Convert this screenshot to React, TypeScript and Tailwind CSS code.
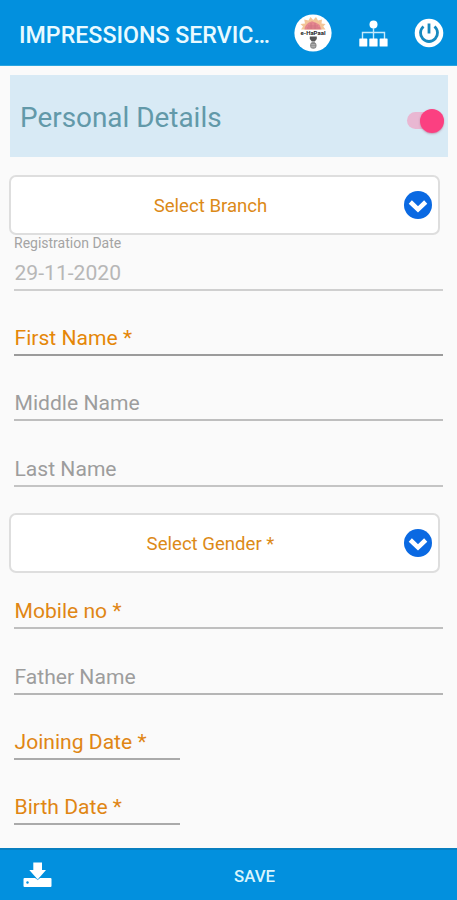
interface FieldProps {
  label: string;
  className: string;
}

const Logo = () => (
  <svg viewBox="0 0 38 38" className="h-[38px] w-[38px] shrink-0">
    <circle cx="19" cy="19" r="18.600" fill="#fff" />
    <path
      d="M7 15.500l2-3-2.500-2.500 4.500-.5-.8-4 4.300 1L16.500 3l2.700 3L22 3l2 3.500 4-1-.5 4 4 .5-2.200 2.500 2.200 3z"
      fill="#f3c598"
    />
    <path d="M10.500 15.500c0-3 2-5.500 4-6.700l3.500-1.500 4 1.500 3.500 2 2 4.700z" fill="#e5878f" />
    <path d="M14 12h10M13 14h13M17 9v6M21 9v6" stroke="#ce7181" strokeWidth=".8" />
    <text
      x="19"
      y="20.500"
      textAnchor="middle"
      fontSize="5"
      fontWeight="700"
      textLength="25"
      lengthAdjust="spacingAndGlyphs"
      fill="#252525"
      className="font-['Roboto',sans-serif]"
    >
      e-HaPaal
    </text>
    <path d="M15.800 22.500h7v2.500l-2 2.500h-3l-2-2.500z" fill="#555" />
    <path d="M17.500 28h3.500v1.200h-3.500z" fill="#aaa" />
    <circle cx="19.300" cy="31.500" r="3.200" fill="#888" />
    <path d="M17.300 30.800h4M17.300 32.800h4" stroke="#ccc" strokeWidth=".8" />
  </svg>
);

const SitemapIcon = () => (
  <svg viewBox="0 0 29 27" className="h-[27px] w-[29px] shrink-0" fill="#fff">
    <circle cx="14.500" cy="4.500" r="4" />
    <path d="M14.500 8v11M3.500 19v-6.500h22V19" fill="none" stroke="#c5e9fb" strokeWidth="1.400" />
    <rect x=".3" y="18.500" width="8" height="8" rx=".6" />
    <rect x="10.300" y="18.500" width="8.300" height="8" rx=".6" />
    <rect x="20.600" y="18.500" width="8" height="8" rx=".6" />
  </svg>
);

const PowerIcon = () => (
  <svg viewBox="0 0 30 30" className="h-[30px] w-[30px] shrink-0">
    <circle cx="15" cy="15" r="14.300" fill="#fff" />
    <path
      d="M9.500 8.500a8.500 8.500 0 1 0 11 0M15 5.500v10"
      fill="none"
      stroke="#1689bf"
      strokeWidth="2.800"
    />
  </svg>
);

const ChevronBadge = () => (
  <svg viewBox="0 0 28 28" className="h-7 w-7 shrink-0">
    <circle cx="14" cy="14" r="14" fill="#0a69e2" />
    <path d="M6.300 11l7.700 7.300 7.700-7.300" fill="none" stroke="#fff" strokeWidth="4.600" />
  </svg>
);

const DownloadIcon = () => (
  <svg viewBox="0 0 29 26" className="h-[26px] w-[29px]">
    <rect x=".5" y="16" width="28" height="9" rx="1" fill="#fff" />
    <path d="M10.300.5h8.700V8h4l-8.300 9.500L6.300 8h4z" fill="#fff" />
    <path d="M11.500 15.200l3.200 2.300 3.200-2.300" fill="none" stroke="#0290de" strokeWidth=".8" />
    <circle cx="4.500" cy="20.500" r="1.200" fill="#0290de" />
  </svg>
);

const SelectBox = ({ label, className }: FieldProps) => (
  <button
    className={`ml-[9px] flex w-[431px] items-center rounded-[7px] border-2 border-[#dedede] bg-white pr-[6px] pl-[6px] text-[#dc8a18] ${className}`}
  >
    <span className="flex-1 pt-[3px] text-center text-[18.600px]">{label}</span>
    <ChevronBadge />
  </button>
);

const Field = ({ label, className }: FieldProps) => (
  <div
    className={`mx-[14px] flex items-end border-b-2 pb-[3px] pl-[0.500px] text-[21.100px] leading-[26px] ${className}`}
  >
    {label}
  </div>
);

const App = () => {
  return (
    <div className="flex h-[900px] w-full flex-col overflow-hidden bg-[#fafafa] font-['Roboto',sans-serif]">
      <header className="flex h-[66px] shrink-0 items-center border-b border-[#2aa5df] bg-[#0290de] pt-px">
        <h1 className="mt-[4px] ml-[19px] w-[275px] text-[23.200px] font-medium whitespace-nowrap text-[#e9faff]">
          IMPRESSIONS SERVIC…
        </h1>
        <Logo />
        <div className="ml-[27px] flex items-center gap-[26px]">
          <SitemapIcon />
          <PowerIcon />
        </div>
      </header>

      <main className="flex min-h-0 flex-1 flex-col">
        <section className="mt-[9px] mr-[9px] ml-[10px] flex h-[82px] shrink-0 items-center justify-between bg-[#d8eaf5] pr-[4px] pl-[10px]">
          <h2 className="pt-[3px] text-[27.900px] text-[#6299a9]">Personal Details</h2>
          <div className="mt-[9px] flex h-[17px] w-[37px] items-center justify-end rounded-full bg-[#e9b7d2]">
            <span className="h-6 w-6 shrink-0 rounded-full bg-[#fb4081] shadow-[0_1px_2px_#a05b7d80]" />
          </div>
        </section>

        <SelectBox label="Select Branch" className="mt-[18px] h-[60px] shrink-0" />
        <span className="ml-[14px] h-4 text-[14px] leading-4 text-[#a4a4a4]">Registration Date</span>
        <Field label="29-11-2020" className="h-[40px] border-[#cfcfcf] text-[#b7b7b7]" />
        <Field label="First Name *" className="h-[65px] border-[#9b9b9b] text-[#e58708]" />
        <Field label="Middle Name" className="h-[65px] border-[#bebebe] text-[#9d9d9d]" />
        <Field label="Last Name" className="h-[66px] border-[#c4c4c4] text-[#9d9d9d]" />

        <SelectBox label="Select Gender *" className="mt-[26px] h-[60px] shrink-0" />
        <Field label="Mobile no *" className="h-[56px] border-[#bfbfbf] text-[#e08614]" />
        <Field label="Father Name" className="h-[66px] border-[#b5b5b5] text-[#9d9d9d]" />
        <Field label="Joining Date *" className="mr-[277px] h-[65px] border-[#aaaaaa] text-[#e08614]" />
        <Field label="Birth Date *" className="mr-[277px] h-[65px] border-[#aaaaaa] text-[#e08614]" />
      </main>

      <footer className="grid h-[52px] shrink-0 grid-cols-[1fr_auto_1fr] items-center border-t-2 border-[#087fc0] bg-[#0290de]">
        <button className="ml-[23px]">
          <DownloadIcon />
        </button>
        <button className="mr-[-52px] pt-[4px] text-[16.800px] font-medium text-[#d9f5fc]">SAVE</button>
      </footer>
    </div>
  );
};

export default App;
